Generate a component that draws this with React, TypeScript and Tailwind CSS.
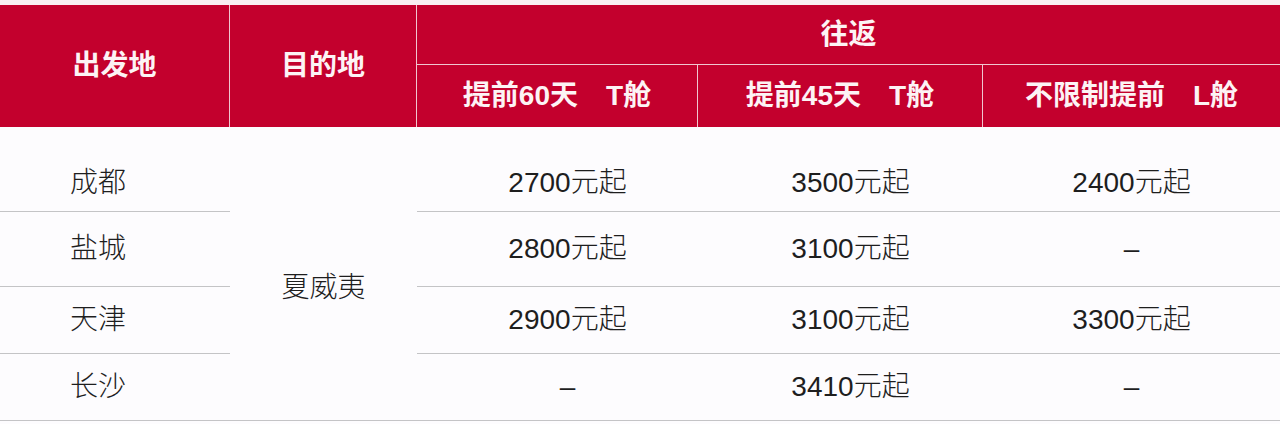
const rows = [
  { from: "成都", t60: "2700元起", t45: "3500元起", l: "2400元起", h: "h-[57px]" },
  { from: "盐城", t60: "2800元起", t45: "3100元起", l: "–", h: "h-[75px]" },
  { from: "天津", t60: "2900元起", t45: "3100元起", l: "3300元起", h: "h-[67px]" },
  { from: "长沙", t60: "–", t45: "3410元起", l: "–", h: "h-[67px]" },
];

const headCell = "bg-[#c3002d] text-[#fdf3f5] font-bold text-[28px] text-center align-middle p-0";
const line = "border-b border-[#c4c4c6]";

export default function App() {
  return (
    <div
      className="w-[1280px] h-[424px] overflow-hidden bg-[#fdfcfe]"
      style={{ fontFamily: '"Liberation Sans", "Noto Sans CJK SC", sans-serif' }}
    >
      <div className="h-[5px] bg-[#f9eff2]" />
      <table className="w-full table-fixed border-separate border-spacing-0 leading-none text-[#1e1e1e]">
        <colgroup>
          <col className="w-[230px]" />
          <col className="w-[187px]" />
          <col className="w-[281px]" />
          <col className="w-[285px]" />
          <col className="w-[297px]" />
        </colgroup>
        <thead>
          <tr className="h-[60px]">
            <th rowSpan={2} className={`${headCell} border-r border-[#f0c6cf]`}>
              出发地
            </th>
            <th rowSpan={2} className={`${headCell} border-r border-[#f0c6cf]`}>
              目的地
            </th>
            <th colSpan={3} className={`${headCell} border-b border-[#f0c6cf]`}>
              往返
            </th>
          </tr>
          <tr className="h-[62px]">
            <th className={`${headCell} border-r border-[#f0c6cf]`}>提前60天{"\u3000"}T舱</th>
            <th className={`${headCell} border-r border-[#f0c6cf]`}>提前45天{"\u3000"}T舱</th>
            <th className={headCell}>不限制提前{"\u3000"}L舱</th>
          </tr>
        </thead>
        <tbody className="text-[28px] font-light">
          <tr className="h-[28px]">
            <td colSpan={5} className="p-0" />
          </tr>
          {rows.map((r, i) => (
            <tr key={r.from} className={r.h}>
              <td className={`${line} pl-[70px] text-left align-middle`}>{r.from}</td>
              {i === 0 && (
                <td rowSpan={4} className={`${line} text-center align-middle`}>
                  夏威夷
                </td>
              )}
              <td className={`${line} pl-5 text-center align-middle`}>{r.t60}</td>
              <td className={`${line} pl-5 text-center align-middle`}>{r.t45}</td>
              <td className={`${line} text-center align-middle`}>{r.l}</td>
            </tr>
          ))}
        </tbody>
      </table>
    </div>
  );
}
